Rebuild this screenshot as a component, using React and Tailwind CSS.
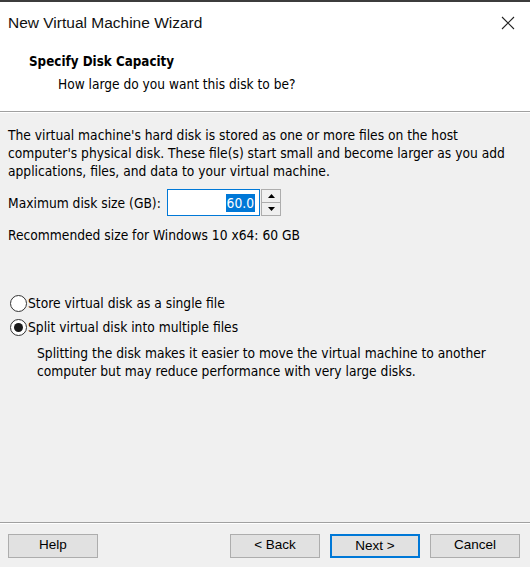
import React from 'react';

const body = { fontFamily: '"DejaVu Sans Condensed", "DejaVu Sans", sans-serif' };

function Radio({ checked, label }) {
  return (
    <label className="flex items-center h-[24px]">
      <span className="w-[17px] h-[17px] rounded-full border border-[#333] bg-white flex items-center justify-center mr-[1px]">
        {checked && <span className="w-[9px] h-[9px] rounded-full bg-[#1a1a1a]" />}
      </span>
      <span>{label}</span>
    </label>
  );
}

function Button({ children, focused, className }) {
  return (
    <button
      type="button"
      className={
        'h-[24px] w-[90px] bg-[#e1e1e1] text-[13.5px] text-black ' +
        (focused ? 'border-2 border-[#0078d7] ' : 'border border-[#adadad] ') +
        (className || '')
      }
    >
      {children}
    </button>
  );
}

export default function App() {
  return (
    <div className="w-[530px] h-[567px] flex flex-col bg-[#f0f0f0] text-black border-t-2 border-[#3c3c3c]" style={body}>
      {/* header */}
      <div className="bg-white h-[110px] flex flex-col border-b border-[#a0a0a0]">
        <div className="flex items-center justify-between h-[41px] pl-[8px] pr-[10px]">
          <span className="text-[15.5px] text-[#111]" style={{ fontFamily: '"Liberation Sans", Arial, sans-serif' }}>
            New Virtual Machine Wizard
          </span>
          <svg width="14" height="14" viewBox="0 0 14 14" className="mr-[5px]">
            <path d="M1 1 L13 13 M13 1 L1 13" stroke="#222" strokeWidth="1.1" />
          </svg>
        </div>
        <div className="pl-[29px] pt-[9px] text-[13.3px] font-bold">Specify Disk Capacity</div>
        <div className="pl-[58px] pt-[2px] text-[13.6px]">How large do you want this disk to be?</div>
      </div>
      <div className="h-px bg-white" />

      {/* body */}
      <div className="flex-1 flex flex-col px-[8px] pt-[13px] text-[13.7px] leading-[18px]">
        <p>
          The virtual machine's hard disk is stored as one or more files on the host computer's physical disk. These
          file(s) start small and become larger as you add applications, files, and data to your virtual machine.
        </p>
        <div className="flex items-center mt-[9px] h-[27px]">
          <span className="w-[159px]">Maximum disk size (GB):</span>
          <div className="w-[93px] h-[27px] bg-white border border-[#0078d7] flex items-center justify-end pr-[4px]">
            <span className="bg-[#0078d7] text-white px-[1px]">60.0</span>
          </div>
          <div className="ml-[1px] w-[20px] h-[27px] flex flex-col border border-[#adadad] bg-[#f0f0f0]">
            <div className="flex-1 flex items-center justify-center border-b border-[#adadad]">
              <svg width="7" height="4" viewBox="0 0 7 4"><path d="M0 4 L3.5 0 L7 4 Z" fill="#000" /></svg>
            </div>
            <div className="flex-1 flex items-center justify-center">
              <svg width="7" height="4" viewBox="0 0 7 4"><path d="M0 0 L3.5 4 L7 0 Z" fill="#000" /></svg>
            </div>
          </div>
        </div>
        <p className="mt-[10px]">Recommended size for Windows 10 x64: 60 GB</p>

        <div className="mt-[47px] pl-[2px]">
          <Radio label="Store virtual disk as a single file" />
          <Radio checked label="Split virtual disk into multiple files" />
        </div>
        <p className="pl-[29px] mt-[5px]">
          Splitting the disk makes it easier to move the virtual machine to another computer but may reduce
          performance with very large disks.
        </p>
      </div>

      {/* footer */}
      <div className="border-t border-[#a0a0a0]">
        <div className="border-t border-white h-[44px] flex items-center pl-[8px] pr-[10px]" style={{ fontFamily: '"Liberation Sans", Arial, sans-serif' }}>
          <Button>Help</Button>
          <div className="flex-1" />
          <Button>&lt; Back</Button>
          <Button focused className="ml-[10px]">Next &gt;</Button>
          <Button className="ml-[10px]">Cancel</Button>
        </div>
      </div>
    </div>
  );
}
